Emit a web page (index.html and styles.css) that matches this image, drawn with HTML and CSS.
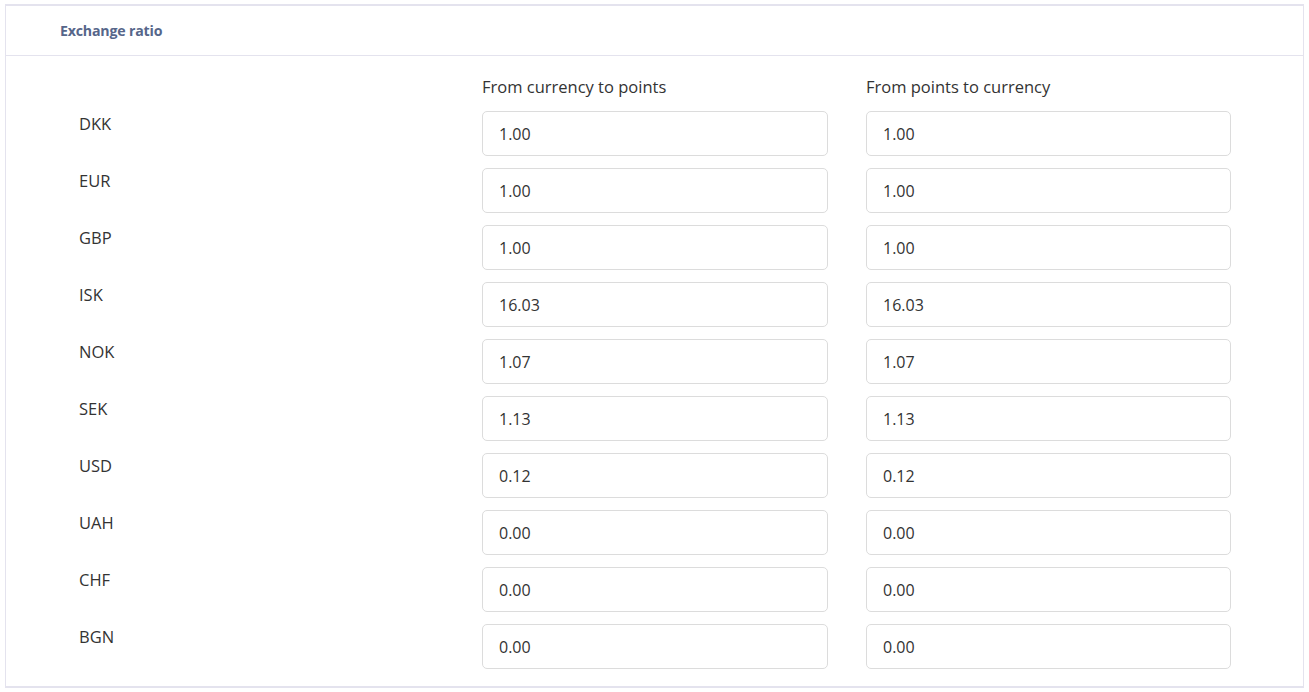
FILE: index.html
```html
<!DOCTYPE html>
<html lang="en">
<head>
<meta charset="utf-8">
<title>Exchange ratio</title>
<link rel="stylesheet" href="styles.css">
</head>
<body>
<div class="card">
  <div class="card-header">Exchange ratio</div>
  <div class="card-body">
    <div class="ratio-grid">
      <div></div>
      <div class="col-title">From currency to points</div>
      <div class="col-title">From points to currency</div>

      <div class="cur">DKK</div>
      <input class="field" type="text" value="1.00">
      <input class="field" type="text" value="1.00">

      <div class="cur">EUR</div>
      <input class="field" type="text" value="1.00">
      <input class="field" type="text" value="1.00">

      <div class="cur">GBP</div>
      <input class="field" type="text" value="1.00">
      <input class="field" type="text" value="1.00">

      <div class="cur">ISK</div>
      <input class="field" type="text" value="16.03">
      <input class="field" type="text" value="16.03">

      <div class="cur">NOK</div>
      <input class="field" type="text" value="1.07">
      <input class="field" type="text" value="1.07">

      <div class="cur">SEK</div>
      <input class="field" type="text" value="1.13">
      <input class="field" type="text" value="1.13">

      <div class="cur">USD</div>
      <input class="field" type="text" value="0.12">
      <input class="field" type="text" value="0.12">

      <div class="cur">UAH</div>
      <input class="field" type="text" value="0.00">
      <input class="field" type="text" value="0.00">

      <div class="cur">CHF</div>
      <input class="field" type="text" value="0.00">
      <input class="field" type="text" value="0.00">

      <div class="cur">BGN</div>
      <input class="field" type="text" value="0.00">
      <input class="field" type="text" value="0.00">
    </div>
  </div>
</div>
</body>
</html>
```

FILE: styles.css
```css
html, body {
  margin: 0;
  padding: 0;
  background: #ffffff;
}

body {
  font-family: "Open Sans", "Noto Sans", "Liberation Sans", sans-serif;
  color: #333333;
}

.card {
  margin: 4px 0 0 5px;
  width: 1299px;
  box-sizing: border-box;
  border-left: 1px solid #e4e3ee;
  border-right: 1px solid #e4e3ee;
  border-top: 2px solid #e4e3ee;
  border-bottom: 2px solid #e4e3ee;
}

.card-header {
  height: 50px;
  box-sizing: border-box;
  border-bottom: 1px solid #e4e3ee;
  padding-left: 54px;
  display: flex;
  align-items: center;
  font-size: 14.2px;
  font-weight: 700;
  color: #56668a;
  letter-spacing: -0.2px;
}

.card-body {
  padding: 19px 0 17px 73px;
}

.ratio-grid {
  display: grid;
  grid-template-columns: 365px 346px 365px;
  column-gap: 38px;
  row-gap: 12px;
}

.col-title {
  font-size: 16.5px;
  line-height: 24px;
  color: #333333;
}

.cur {
  font-size: 16.5px;
  line-height: 24px;
  padding-top: 1px;
  color: #333333;
}

.field {
  height: 45px;
  width: 100%;
  box-sizing: border-box;
  border: 1px solid #dcdcdc;
  border-radius: 5px;
  padding: 0 16px;
  margin: 0;
  font-family: "Open Sans", "Noto Sans", "Liberation Sans", sans-serif;
  font-size: 16px;
  color: #333333;
  background: #ffffff;
  outline: none;
}
```
